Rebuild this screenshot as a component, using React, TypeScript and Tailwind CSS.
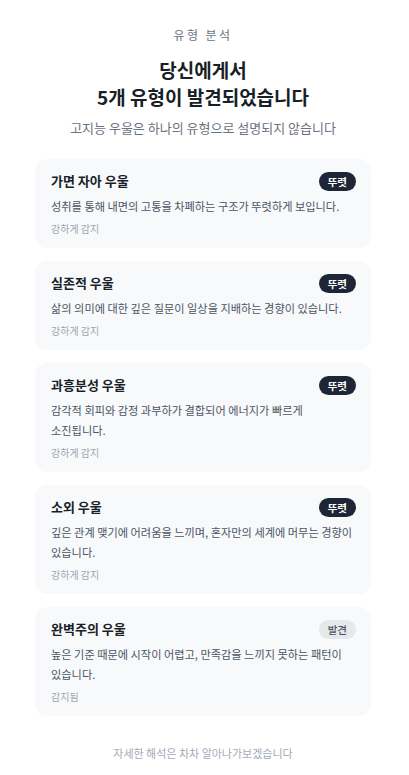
const types = [
  {
    name: "가면 자아 우울",
    desc: "성취를 통해 내면의 고통을 차폐하는 구조가 뚜렷하게 보입니다.",
    level: "강하게 감지",
    badge: "뚜렷",
  },
  {
    name: "실존적 우울",
    desc: "삶의 의미에 대한 깊은 질문이 일상을 지배하는 경향이 있습니다.",
    level: "강하게 감지",
    badge: "뚜렷",
  },
  {
    name: "과흥분성 우울",
    desc: "감각적 회피와 감정 과부하가 결합되어 에너지가 빠르게 소진됩니다.",
    level: "강하게 감지",
    badge: "뚜렷",
  },
  {
    name: "소외 우울",
    desc: "깊은 관계 맺기에 어려움을 느끼며, 혼자만의 세계에 머무는 경향이 있습니다.",
    level: "강하게 감지",
    badge: "뚜렷",
  },
  {
    name: "완벽주의 우울",
    desc: "높은 기준 때문에 시작이 어렵고, 만족감을 느끼지 못하는 패턴이 있습니다.",
    level: "감지됨",
    badge: "발견",
  },
];

const TypeCard = ({ t }: { t: (typeof types)[number] }) => {
  const strong = t.badge === "뚜렷";
  return (
    <div className="rounded-xl bg-[#f8f9fb] px-4 pt-3 pb-3">
      <div className="flex h-5 items-center justify-between">
        <h3 className="text-[13px] leading-5 font-bold text-[#191f28]">{t.name}</h3>
        <span
          className={
            strong
              ? "-mr-px rounded-full bg-[#1e2636] px-[9px] text-[10.5px] leading-[19px] font-bold text-white"
              : "-mr-px rounded-full bg-[#e7e8eb] px-[9px] text-[10.5px] leading-[19px] font-medium text-[#4b5563]"
          }
        >
          {t.badge}
        </span>
      </div>
      <p className="mt-[5px] break-keep text-[11.2px] leading-5 text-[#4b5563]">{t.desc}</p>
      <p className="mt-[5px] text-[10px] leading-[15px] text-[#a0a6b1]">{t.level}</p>
    </div>
  );
};

const App = () => {
  return (
    <div
      className="min-h-screen bg-white pt-[26px] pb-8 pl-[35px] pr-[38px]"
      style={{ fontFamily: '"Noto Sans CJK KR", "Noto Sans", sans-serif' }}
    >
      <div className="text-center">
        <p className="text-[12px] leading-[18px] tracking-[0.2em] text-[#6b7280]">유형 분석</p>
        <h1 className="mt-[12px] text-[19px] leading-[27px] font-bold text-[#191f28]">
          당신에게서
          <br />
          5개 유형이 발견되었습니다
        </h1>
        <p className="mt-[9px] text-[13px] leading-[18px] text-[#6b7280]">
          고지능 우울은 하나의 유형으로 설명되지 않습니다
        </p>
      </div>

      <div className="mt-[22px] flex flex-col gap-[13px]">
        {types.map((t) => (
          <TypeCard key={t.name} t={t} />
        ))}
      </div>

      <p className="mt-[29px] text-center text-[11px] leading-4 text-[#a3aab6]">
        자세한 해석은 차차 알아나가보겠습니다
      </p>
    </div>
  );
};

export default App;
